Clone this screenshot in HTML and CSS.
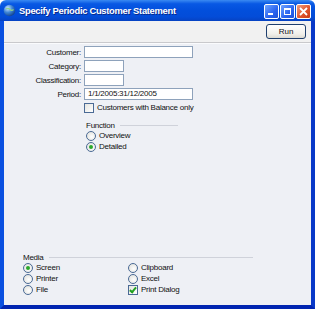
FILE: index.html
```html
<!DOCTYPE html>
<html lang="en">
<head>
  <meta charset="UTF-8">
  <title>Specify Periodic Customer Statement</title>
  <link rel="stylesheet" href="styles.css">
</head>
<body>
  <div class="window">
    <!-- Title bar -->
    <div class="titlebar">
      <svg class="app-icon" width="13" height="13" viewBox="0 0 13 13">
        <defs>
          <radialGradient id="globe" cx="0.35" cy="0.3" r="0.75">
            <stop offset="0" stop-color="#cfe6ff"/>
            <stop offset="0.5" stop-color="#3f86d6"/>
            <stop offset="1" stop-color="#123f8a"/>
          </radialGradient>
        </defs>
        <circle cx="6.5" cy="6.5" r="5.8" fill="url(#globe)"/>
        <path d="M3 5c1.5-1 3-.5 4 .5s2.5 1 3.5 0" stroke="#8fd18a" stroke-width="1.2" fill="none"/>
      </svg>
      <span class="title">Specify Periodic Customer Statement</span>
      <div class="caption-buttons">
        <span class="cap-btn"><span class="min-glyph"></span></span>
        <span class="cap-btn"><span class="max-glyph"></span></span>
        <span class="cap-btn close">
          <svg width="9" height="9" viewBox="0 0 9 9"><path d="M1 1L8 8M8 1L1 8" stroke="#fff" stroke-width="1.8"/></svg>
        </span>
      </div>
    </div>

    <div class="frame">
      <!-- Toolbar -->
      <div class="toolbar">
        <button class="btn">Run</button>
      </div>

      <div class="content">
        <div class="fields">
          <label>Customer:</label>
          <span class="field wide"></span>
          <label>Category:</label>
          <span class="field narrow"></span>
          <label>Classification:</label>
          <span class="field narrow"></span>
          <label>Period:</label>
          <span class="field wide">1/1/2005:31/12/2005</span>
          <span></span>
          <span class="option"><span class="check"></span>Customers with Balance only</span>
        </div>

        <div class="group function">
          <div class="group-head"><span>Function</span><span class="rule"></span></div>
          <span class="option"><span class="radio"></span>Overview</span>
          <span class="option"><span class="radio on"></span>Detailed</span>
        </div>

        <div class="group media">
          <div class="group-head"><span>Media</span><span class="rule"></span></div>
          <div class="media-grid">
            <span class="option"><span class="radio on"></span>Screen</span>
            <span class="option"><span class="radio"></span>Clipboard</span>
            <span class="option"><span class="radio"></span>Printer</span>
            <span class="option"><span class="radio"></span>Excel</span>
            <span class="option"><span class="radio"></span>File</span>
            <span class="option"><span class="check on"></span>Print Dialog</span>
          </div>
        </div>
      </div>
    </div>
  </div>
</body>
</html>
```

FILE: styles.css
```css
html, body {
  margin: 0;
  padding: 0;
  background: #fff;
}
.window {
  width: 315px;
  height: 309px;
  display: flex;
  flex-direction: column;
  font-family: "Liberation Sans", Arial, sans-serif;
  font-size: 8px;
  letter-spacing: -0.25px;
  color: #111;
}
/* XP style caption */
.titlebar {
  height: 21px;
  flex: none;
  display: flex;
  align-items: center;
  padding: 0 4px 0 3px;
  background: linear-gradient(#3a8af2 0%, #0858e4 18%, #024fdc 50%, #034cd8 80%, #0642c2 100%);
  border-radius: 6px 6px 0 0;
}
.app-icon {
  flex: none;
  margin-right: 3px;
}
.title {
  color: #fff;
  font-weight: bold;
  font-size: 9.4px;
  letter-spacing: -0.3px;
  text-shadow: 1px 1px 0 #0a2a8a;
  flex: 1;
}
.caption-buttons {
  display: flex;
  gap: 1px;
  margin-top: 1px;
}
.cap-btn {
  width: 15px;
  height: 15px;
  box-sizing: border-box;
  border: 1px solid #fff;
  border-radius: 2px;
  background: linear-gradient(135deg, #6fa4ff, #2a64f0 60%, #1f52d8);
  display: flex;
  align-items: center;
  justify-content: center;
  position: relative;
}
.cap-btn.close {
  background: linear-gradient(135deg, #f0a080, #e0562e 55%, #c83a16);
}
.min-glyph {
  position: absolute;
  left: 3px;
  bottom: 3px;
  width: 5px;
  height: 2px;
  background: #fff;
}
.max-glyph {
  width: 7px;
  height: 7px;
  box-sizing: border-box;
  border: 1px solid #fff;
  border-top-width: 2px;
}
.frame {
  flex: 1;
  display: flex;
  flex-direction: column;
  border-style: solid;
  border-width: 0 4px 4px 4px;
  border-color: #0646d8 #0838c8 #0024b0 #0a50e0;
}
.toolbar {
  height: 22px;
  flex: none;
  display: flex;
  justify-content: flex-end;
  align-items: flex-start;
  padding: 3px 5px 0 0;
  box-sizing: border-box;
  background: #f1f1f1;
  border-bottom: 1px solid #c9c9cc;
}
.btn {
  width: 40px;
  height: 15px;
  padding: 0;
  font: inherit;
  font-size: 8px;
  color: #111;
  border: 1px solid #1f3f6e;
  border-radius: 3px;
  background: linear-gradient(#ffffff, #f0efea 70%, #dcdad2);
}
.content {
  flex: 1;
  display: flex;
  flex-direction: column;
  background: #eef0f5;
  border-top: 1px solid #fafbfd;
  padding-bottom: 10px;
}
.fields {
  display: grid;
  grid-template-columns: 77px auto;
  column-gap: 3px;
  row-gap: 2px;
  padding-top: 2px;
  align-items: center;
  justify-items: start;
}
.fields label {
  justify-self: end;
}
.field {
  height: 12px;
  box-sizing: border-box;
  border: 1px solid #8ea2bb;
  background: #fff;
  padding-left: 3px;
  line-height: 10px;
}
.field.wide {
  width: 109px;
}
.field.narrow {
  width: 40px;
}
.option {
  display: flex;
  align-items: center;
  height: 11px;
  white-space: nowrap;
}
.check {
  width: 10px;
  height: 10px;
  box-sizing: border-box;
  border: 1px solid #4a6a95;
  background: linear-gradient(135deg, #e4e4df, #fff);
  margin-right: 3px;
  position: relative;
}
.check.on::after {
  content: "";
  position: absolute;
  left: 2px;
  top: 0;
  width: 2px;
  height: 5px;
  border: solid #21a121;
  border-width: 0 2px 2px 0;
  transform: rotate(40deg);
}
.radio {
  width: 10px;
  height: 10px;
  box-sizing: border-box;
  border: 1px solid #4a6a95;
  border-radius: 50%;
  background: radial-gradient(circle at 60% 60%, #fff, #dcdcd6);
  margin-right: 3px;
  display: flex;
  align-items: center;
  justify-content: center;
}
.radio.on::after {
  content: "";
  width: 4px;
  height: 4px;
  border-radius: 50%;
  background: #2aa82a;
}
.group-head {
  display: flex;
  align-items: center;
  height: 9px;
}
.rule {
  flex: 1;
  height: 1px;
  background: #cfd2da;
  margin-left: 5px;
}
.function {
  width: 92px;
  margin: 8px 0 0 82px;
}
.media {
  width: 230px;
  margin: auto 0 0 19px;
}
.media-grid {
  display: grid;
  grid-template-columns: 105px auto;
}
```
